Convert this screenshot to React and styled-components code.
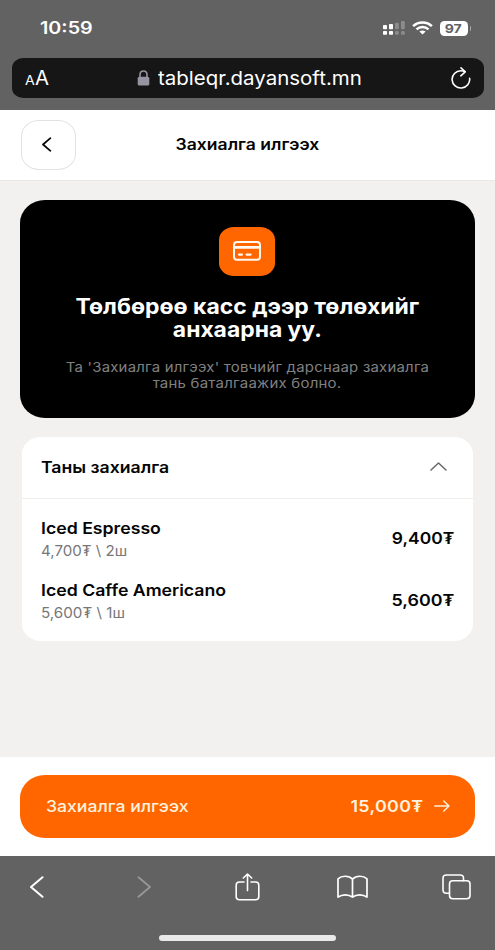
import React from 'react';
import styled, { createGlobalStyle } from 'styled-components';

const GlobalStyle = createGlobalStyle`
  * { box-sizing: border-box; }
  body { margin: 0; background: #626262; font-family: Inter, "Noto Sans", sans-serif; }
  button { font-family: inherit; border: 0; padding: 0; background: none; color: inherit; }
  svg { display: block; flex: none; }
`;

/* Single line of text with widened letterforms. */
const Label = styled.span`
  display: block;
  white-space: pre;
  font-size: ${(p) => p.$size}px;
  font-weight: ${(p) => p.$weight || 400};
  line-height: ${(p) => p.$line || 20}px;
  letter-spacing: ${(p) => p.$track || 0}px;
  color: ${(p) => p.$color || 'inherit'};
  transform: scaleX(${(p) => p.$wide || 1.1});
  transform-origin: ${(p) => p.$from || 'left'} center;
`;

const Screen = styled.div`
  width: 495px;
  height: 950px;
  display: flex;
  flex-direction: column;
  overflow: hidden;
  background: #f2f1f0;
  color: #050505;
`;

const BrowserTop = styled.header`
  height: 109.5px;
  background: #626262;
  color: #fff;
`;

const StatusBar = styled.div`
  height: 57.5px;
  padding: 0 24px 1px 40px;
  display: flex;
  align-items: center;
  justify-content: space-between;
`;

const StatusIcons = styled.div`
  display: flex;
  align-items: center;
`;

const Wifi = styled.svg`
  margin: 0 7px 0 7px;
`;

const Battery = styled.div`
  width: 28.5px;
  height: 14.5px;
  border-radius: 4.5px;
  background: #fff;
  display: flex;
  justify-content: center;
  align-items: center;
`;

const BatteryTip = styled.div`
  width: 1.5px;
  height: 4.5px;
  margin-left: 1.5px;
  border-radius: 0 2px 2px 0;
  background: #a5a5a5;
`;

const AddressBar = styled.div`
  height: 40.5px;
  margin: 0 11.5px;
  padding: 0 13px;
  border-radius: 11px / 10px;
  background: #161616;
  display: grid;
  grid-template-columns: 112px 1fr 20px;
  align-items: center;
`;

const TextSize = styled.div`
  padding-top: 3px;
  display: flex;
  align-items: baseline;
  gap: 1.5px;
`;

const Address = styled.div`
  display: flex;
  align-items: center;
  gap: 8px;
`;

const AddressText = styled.div`
  padding-top: 2px;
`;

const PageHeader = styled.div`
  height: 71.5px;
  padding: 0 20.5px;
  background: #fff;
  border-bottom: 1px solid #e9e8e7;
  display: grid;
  grid-template-columns: 55.5px 1fr 56.5px;
  align-items: center;
  justify-items: center;
`;

const BackButton = styled.button`
  width: 55.5px;
  height: 49.5px;
  padding-right: 2px;
  border: 1px solid #e3e2e0;
  border-radius: 18px / 16px;
  display: grid;
  place-items: center;
`;

const Content = styled.main`
  flex: 1;
  padding: 18.5px 20px 0;
`;

const Notice = styled.section`
  height: 218.5px;
  width: 454.5px;
  padding-top: 27px;
  border-radius: 25px / 23px;
  background: #000;
  color: #fff;
  display: flex;
  flex-direction: column;
  align-items: center;
`;

const NoticeIcon = styled.div`
  width: 56px;
  height: 49.5px;
  border-radius: 15px / 13px;
  background: #ff6600;
  display: grid;
  place-items: center;
`;

const NoticeTitle = styled.div`
  margin-top: 18.5px;
  display: flex;
  flex-direction: column;
  align-items: center;
`;

const NoticeText = styled(NoticeTitle)`
  margin-top: 17.5px;
`;

const OrderCard = styled.section`
  width: 451px;
  height: 204px;
  margin: 19px 2px 0;
  border-radius: 19px / 17px;
  background: #fff;
`;

const OrderHeader = styled.div`
  height: 62px;
  padding: 0 26px 2px 19px;
  border-bottom: 1px solid #efeeed;
  display: flex;
  align-items: center;
  justify-content: space-between;
`;

const OrderList = styled.div`
  padding: 18px 19px 0;
  display: grid;
  gap: 18px;
`;

const OrderItem = styled.div`
  height: 44px;
  display: flex;
  align-items: center;
  justify-content: space-between;
`;

const OrderTotal = styled.div`
  padding-bottom: 2px;
`;

const Footer = styled.footer`
  height: 99px;
  padding: 17.5px 20px 0;
  background: #fff;
`;

const SubmitButton = styled.button`
  width: 454.5px;
  height: 63px;
  padding: 0 25px 0 26px;
  border-radius: 25px / 23px;
  background: #ff6600;
  color: #fff1dc;
  display: flex;
  align-items: center;
  justify-content: space-between;
`;

const Total = styled.div`
  display: flex;
  align-items: center;
  gap: 10px;
`;

const BrowserBottom = styled.nav`
  height: 94px;
  background: #626262;
  color: #fff;
`;

const Toolbar = styled.div`
  height: 61px;
  margin: 0 -15px;
  display: grid;
  grid-template-columns: 103px 113px 93px 116px 93px;
  align-items: center;
  justify-items: center;
`;

const HomeIndicator = styled.div`
  width: 177px;
  height: 6px;
  margin: 18px auto 0;
  border-radius: 3px;
  background: #e9e9e9;
`;

const stroke = { fill: 'none', stroke: 'currentColor', strokeLinecap: 'round', strokeLinejoin: 'round' };

const SignalIcon = () => (
  <svg width="22" height="14" viewBox="0 0 22 14" fill="#fff">
    <rect x="0" y="4" width="4" height="4.2" rx=".8" />
    <rect x="6" y="3" width="4" height="5.2" rx=".8" />
    <rect x="12" y="1.8" width="3.8" height="6.4" rx="1" opacity=".27" />
    <rect x="18" y="0" width="3.8" height="8.2" rx="1" opacity=".27" />
    <rect x="0" y="10" width="4" height="3.8" rx=".8" />
    <rect x="6" y="10" width="4" height="3.8" rx=".8" />
    <rect x="12" y="10" width="3.8" height="3.8" rx="1.4" opacity=".27" />
    <rect x="18" y="10" width="3.8" height="3.8" rx="1.4" opacity=".27" />
  </svg>
);

const WifiIcon = () => (
  <Wifi width="21" height="14" viewBox="0 0 21 14" fill="none" stroke="#fff" strokeWidth="2.5">
    <path d="M1.1 5.2C6.2.1 14.8.1 19.9 5.2" />
    <path d="M4.5 8.4c3.4-3.2 8.6-3.2 12 0" />
    <path d="M7.4 10.6c1.8-1.6 4.4-1.6 6.2 0l-3.1 3z" fill="#fff" stroke="none" />
  </Wifi>
);

const LockIcon = () => (
  <svg width="13" height="16" viewBox="0 0 13 16">
    <path d="M3 8V4.7C3 2.2 4.3 1 6.5 1S10 2.2 10 4.7V8" fill="none" stroke="#9893a0" strokeWidth="1.6" />
    <rect x=".7" y="6.7" width="11.6" height="8.9" rx="1.6" fill="#9893a0" />
  </svg>
);

const ReloadIcon = () => (
  <svg width="20" height="22" viewBox="0 0 20 22" {...stroke} strokeWidth="1.6">
    <path d="M18.6 11.2a8.8 8.6 0 1 1-8.8-7.4q2 0 4 .8" />
    <path d="M10 .9l4.2 3.9-4.4 4" />
  </svg>
);

const CardIcon = () => (
  <svg width="28" height="20" viewBox="0 0 28 20" {...stroke} strokeWidth="2" color="#fff8ee">
    <rect x="1" y="1" width="26" height="17.8" rx="3" />
    <path d="M1.5 6.4h25" strokeWidth="2.6" />
    <path d="M6 13.6h3M13.6 13.6h4" strokeWidth="2.2" />
  </svg>
);

const ShareIcon = () => (
  <svg width="25" height="28" viewBox="0 0 25 28" {...stroke} strokeWidth="1.6">
    <path d="M9 9H4.5Q1.2 9 1.2 12v11.8q0 3 3.3 3h16q3.3 0 3.3-3V12q0-3-3.3-3H16" />
    <path d="M12.5 17.6V1.2M8.3 5l4.2-4 4.2 4" />
  </svg>
);

const BookIcon = () => (
  <svg width="31" height="24" viewBox="0 0 31 24" {...stroke} strokeWidth="1.7">
    <path d="M15.5 4.2C12 .4 4.8.2 1 3.9v18.2c4-3.1 10.5-3.1 14.5 0 4-3.1 10.500-3.1 14.5 0V3.9C26.2.2 19 .4 15.5 4.2v17.9" />
  </svg>
);

const TabsIcon = () => (
  <svg width="29" height="26" viewBox="0 0 29 26" {...stroke} strokeWidth="1.6">
    <path d="M7.5 19.2H4.5Q1 19.2 1 16V4.2Q1 1 4.5 1H18q3.5 0 3.5 3.2v2.6" />
    <rect x="7.5" y="6.8" width="20.5" height="18" rx="3.2" />
  </svg>
);

const items = [
  { name: 'Iced Espresso', detail: '4,700₮ \\ 2ш', total: '9,400₮', detailWide: 1.079, totalWide: 1.09 },
  { name: 'Iced Caffe Americano', detail: '5,600₮ \\ 1ш', total: '5,600₮', detailWide: 1.085, totalWide: 1.115 },
];

export default function App() {
  return (
    <>
      <GlobalStyle />
      <Screen>
        <BrowserTop>
          <StatusBar>
            <Label $size={17} $weight={600} $line={21} $wide={1.16}>10:59</Label>
            <StatusIcons>
              <SignalIcon />
              <WifiIcon />
              <Battery>
                <Label $size={12} $weight={700} $line={15} $wide={1.17} $from="center" $color="#626262">97</Label>
              </Battery>
              <BatteryTip />
            </StatusIcons>
          </StatusBar>
          <AddressBar>
            <TextSize>
              <Label $size={13.5} $wide={1.05}>A</Label>
              <Label $size={19.5} $wide={1.04}>A</Label>
            </TextSize>
            <Address>
              <LockIcon />
              <AddressText>
                <Label $size={19} $line={24} $wide={1.077}>tableqr.dayansoft.mn</Label>
              </AddressText>
            </Address>
            <ReloadIcon />
          </AddressBar>
        </BrowserTop>

        <PageHeader>
          <BackButton aria-label="Back">
            <svg width="10" height="15" viewBox="0 0 10 15" {...stroke} strokeWidth="1.7">
              <path d="M8.4 1.2L1 7.5l7.4 6.3" />
            </svg>
          </BackButton>
          <Label $size={15.5} $weight={600} $wide={1.133} $from="center">Захиалга илгээх</Label>
        </PageHeader>

        <Content>
          <Notice>
            <NoticeIcon><CardIcon /></NoticeIcon>
            <NoticeTitle>
              <Label $size={21} $weight={700} $line={23.5} $wide={1.092} $from="center">Төлбөрөө касс дээр төлөхийг</Label>
              <Label $size={21} $weight={700} $line={23.5} $wide={1.09} $from="center">анхаарна уу.</Label>
            </NoticeTitle>
            <NoticeText>
              <Label $size={13.5} $line={16} $track={0.2} $wide={1.105} $from="center" $color="#808080">Та 'Захиалга илгээх' товчийг дарснаар захиалга</Label>
              <Label $size={13.5} $line={16} $track={0.2} $wide={1.11} $from="center" $color="#808080">тань баталгаажих болно.</Label>
            </NoticeText>
          </Notice>

          <OrderCard>
            <OrderHeader>
              <Label $size={16} $weight={600} $wide={1.103}>Таны захиалга</Label>
              <svg width="17" height="9" viewBox="0 0 17 9" {...stroke} strokeWidth="1.5" color="#686868">
                <path d="M1 8l7.5-7L16 8" />
              </svg>
            </OrderHeader>
            <OrderList>
              {items.map((item) => (
                <OrderItem key={item.name}>
                  <div>
                    <Label $size={16} $weight={600} $line={23} $wide={1.105}>{item.name}</Label>
                    <Label $size={14} $line={21} $wide={item.detailWide} $color="#777">{item.detail}</Label>
                  </div>
                  <OrderTotal>
                    <Label $size={16} $weight={600} $wide={item.totalWide} $from="right">{item.total}</Label>
                  </OrderTotal>
                </OrderItem>
              ))}
            </OrderList>
          </OrderCard>
        </Content>

        <Footer>
          <SubmitButton>
            <Label $size={16} $weight={500} $wide={1.101}>Захиалга илгээх</Label>
            <Total>
              <Label $size={16} $weight={600} $track={0.3} $wide={1.115} $from="right">15,000₮</Label>
              <svg width="16" height="12" viewBox="0 0 16 12" {...stroke} strokeWidth="1.5">
                <path d="M.8 6h14M9.8 1l5.2 5-5.2 5" />
              </svg>
            </Total>
          </SubmitButton>
        </Footer>

        <BrowserBottom>
          <Toolbar>
            <svg width="15" height="22" viewBox="0 0 15 22" {...stroke} strokeWidth="2">
              <path d="M13.5 1.2L2 11l11.5 9.8" />
            </svg>
            <svg width="15" height="22" viewBox="0 0 15 22" {...stroke} strokeWidth="1.8" color="#979797">
              <path d="M1.5 1.2L13 11 1.5 20.8" />
            </svg>
            <ShareIcon />
            <BookIcon />
            <TabsIcon />
          </Toolbar>
          <HomeIndicator />
        </BrowserBottom>
      </Screen>
    </>
  );
}
